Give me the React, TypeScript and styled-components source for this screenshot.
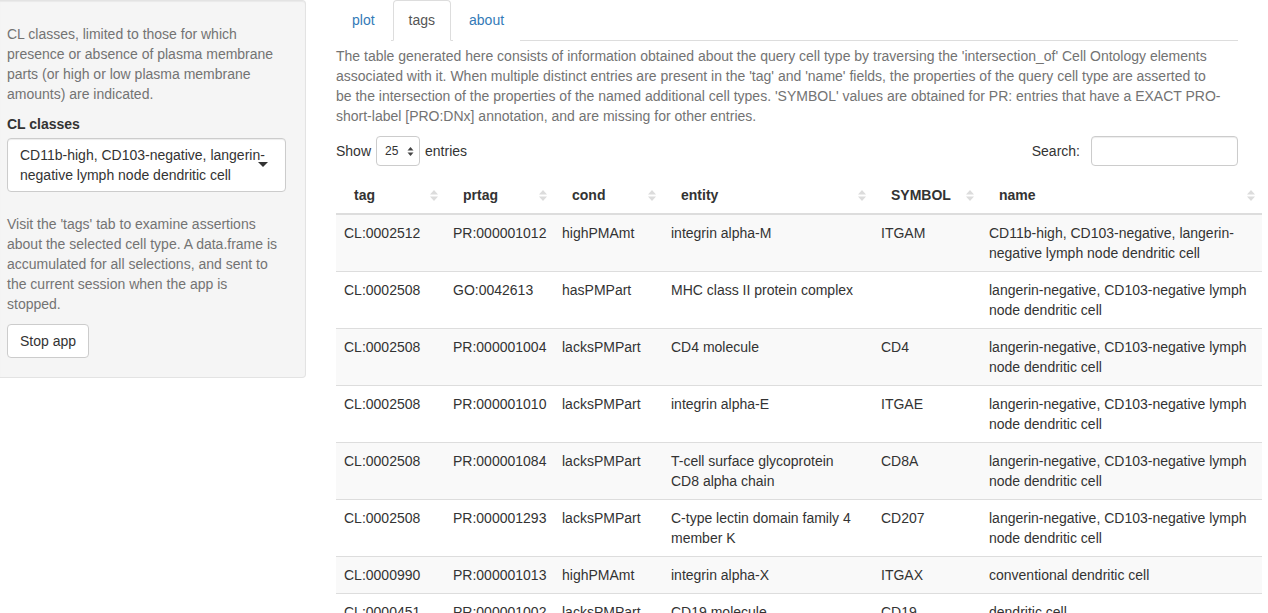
import React from "react";
import styled, { createGlobalStyle } from "styled-components";

const GlobalStyle = createGlobalStyle`
    body {
        margin: 0;
        font-family: "Liberation Sans", "Helvetica Neue", Arial, sans-serif;
        font-size: 14px;
        line-height: 20px;
        color: #333;
        background: #fff;
    }
    * { box-sizing: border-box; }
`;

const Page = styled.div`
    display: flex;
    align-items: flex-start;
`;

const Sidebar = styled.div`
    width: 306px;
    flex-shrink: 0;
`;

const Well = styled.div`
    background: #f5f5f5;
    border: 1px solid #e3e3e3;
    border-left: none;
    border-radius: 0 4px 4px 0;
    box-shadow: inset 0 1px 1px rgba(0, 0, 0, 0.05);
    padding: 18px 19px 19px 7px;
`;

const HelpText = styled.p`
    margin: 5px 0 10px;
    padding-right: 4px;
    color: #737373;
`;

const FormGroup = styled.div`
    margin-bottom: 22px;
`;

const Label = styled.label`
    display: block;
    font-weight: bold;
    margin-bottom: 4px;
`;

const SelectBox = styled.div`
    position: relative;
    background: #fff;
    border: 1px solid #ccc;
    border-radius: 4px;
    box-shadow: inset 0 1px 1px rgba(0, 0, 0, 0.075);
    padding: 6px 12px;
`;

const Caret = styled.span`
    position: absolute;
    right: 17px;
    top: 50%;
    margin-top: -3px;
    width: 0;
    height: 0;
    border-style: solid;
    border-width: 5px 5px 0 5px;
    border-color: #333 transparent transparent transparent;
`;

const Button = styled.button`
    font-family: inherit;
    font-size: 14px;
    line-height: 20px;
    color: #333;
    background: #fff;
    border: 1px solid #ccc;
    border-radius: 4px;
    padding: 6px 12px;
    height: 34px;
`;

const Main = styled.div`
    margin-left: 30px;
    width: 902px;
    flex-shrink: 0;
`;

const Tabs = styled.ul`
    display: flex;
    list-style: none;
    margin: 0;
    padding: 0;
    border-bottom: 1px solid #ddd;
`;

const Tab = styled.li<{ $active?: boolean }>`
    margin-right: 2px;
    margin-bottom: -1px;
    padding: 9px 15px 10px;
    line-height: 20px;
    border: 1px solid ${(p) => (p.$active ? "#ddd" : "transparent")};
    border-bottom-color: transparent;
    border-radius: 4px 4px 0 0;
    background: #fff;
    color: ${(p) => (p.$active ? "#555" : "#337ab7")};
`;

const Description = styled.p`
    margin: 5px 0 10px;
    padding-right: 14px;
    color: #737373;
`;

const Controls = styled.div`
    display: flex;
    justify-content: space-between;
    align-items: center;
    height: 30px;
`;

const ControlLabel = styled.div`
    display: flex;
    align-items: center;
    gap: 5px;
`;

const LengthSelect = styled.div`
    display: flex;
    align-items: center;
    justify-content: space-between;
    width: 44px;
    height: 30px;
    padding: 0 5px 0 8px;
    border: 1px solid #ccc;
    border-radius: 4px;
    font-size: 12px;
    background: #fff;
`;

const SearchInput = styled.div`
    width: 147px;
    height: 30px;
    margin-left: 6px;
    border: 1px solid #ccc;
    border-radius: 4px;
    box-shadow: inset 0 1px 1px rgba(0, 0, 0, 0.075);
    background: #fff;
`;

const Table = styled.table`
    margin-top: 7px;
    width: 926px;
    table-layout: fixed;
    border-collapse: collapse;
`;

const Th = styled.th<{ $w: number }>`
    width: ${(p) => p.$w}px;
    text-align: left;
    font-weight: bold;
    padding: 12px 7px 8px 18px;
    border-bottom: 2px solid #ddd;
`;

const ThInner = styled.div`
    display: flex;
    justify-content: space-between;
    align-items: center;
`;

const Tr = styled.tr<{ $odd: boolean }>`
    background: ${(p) => (p.$odd ? "#f9f9f9" : "#fff")};
`;

const Td = styled.td`
    padding: 8px;
    vertical-align: top;
    border-top: 1px solid #ddd;
`;

const SortIcon = () => (
    <svg width="8" height="13" viewBox="0 0 8 13">
        <path d="M0 5.5 L4 1 L8 5.5 Z" fill="#dcdcdc" />
        <path d="M0 7.5 L4 12 L8 7.5 Z" fill="#dcdcdc" />
    </svg>
);

const SpinArrows = () => (
    <svg width="7" height="11" viewBox="0 0 7 11">
        <path d="M0.5 4.5 L3.5 1 L6.5 4.5 Z" fill="#444" />
        <path d="M0.5 6.5 L3.5 10 L6.5 6.5 Z" fill="#444" />
    </svg>
);

const columns = [
    { key: "tag", w: 109 },
    { key: "prtag", w: 109 },
    { key: "cond", w: 109 },
    { key: "entity", w: 210 },
    { key: "SYMBOL", w: 108 },
    { key: "name", w: 281 },
];

const lnNeg = "langerin-negative, CD103-negative lymph node dendritic cell";

const rows = [
    ["CL:0002512", "PR:000001012", "highPMAmt", "integrin alpha-M", "ITGAM", "CD11b-high, CD103-negative, langerin-negative lymph node dendritic cell"],
    ["CL:0002508", "GO:0042613", "hasPMPart", "MHC class II protein complex", "", lnNeg],
    ["CL:0002508", "PR:000001004", "lacksPMPart", "CD4 molecule", "CD4", lnNeg],
    ["CL:0002508", "PR:000001010", "lacksPMPart", "integrin alpha-E", "ITGAE", lnNeg],
    ["CL:0002508", "PR:000001084", "lacksPMPart", "T-cell surface glycoprotein CD8 alpha chain", "CD8A", lnNeg],
    ["CL:0002508", "PR:000001293", "lacksPMPart", "C-type lectin domain family 4 member K", "CD207", lnNeg],
    ["CL:0000990", "PR:000001013", "highPMAmt", "integrin alpha-X", "ITGAX", "conventional dendritic cell"],
    ["CL:0000451", "PR:000001002", "lacksPMPart", "CD19 molecule", "CD19", "dendritic cell"],
];

export default function App() {
    return (
        <>
            <GlobalStyle />
            <Page>
                <Sidebar>
                    <Well>
                        <HelpText>
                            CL classes, limited to those for which presence or absence of plasma membrane parts (or high or low plasma membrane amounts) are indicated.
                        </HelpText>
                        <FormGroup>
                            <Label>CL classes</Label>
                            <SelectBox>
                                CD11b-high, CD103-negative, langerin-negative lymph node dendritic cell
                                <Caret />
                            </SelectBox>
                        </FormGroup>
                        <HelpText>
                            Visit the 'tags' tab to examine assertions about the selected cell type. A data.frame is accumulated for all selections, and sent to the current session when the app is stopped.
                        </HelpText>
                        <Button>Stop app</Button>
                    </Well>
                </Sidebar>
                <Main>
                    <Tabs>
                        <Tab>plot</Tab>
                        <Tab $active>tags</Tab>
                        <Tab>about</Tab>
                    </Tabs>
                    <Description>
                        The table generated here consists of information obtained about the query cell type by traversing the 'intersection_of' Cell Ontology elements associated with it. When multiple distinct entries are present in the 'tag' and 'name' fields, the properties of the query cell type are asserted to be the intersection of the properties of the named additional cell types. 'SYMBOL' values are obtained for PR: entries that have a EXACT PRO-short-label [PRO:DNx] annotation, and are missing for other entries.
                    </Description>
                    <Controls>
                        <ControlLabel>
                            Show
                            <LengthSelect>
                                25
                                <SpinArrows />
                            </LengthSelect>
                            entries
                        </ControlLabel>
                        <ControlLabel>
                            Search:
                            <SearchInput />
                        </ControlLabel>
                    </Controls>
                    <Table>
                        <thead>
                            <tr>
                                {columns.map((c) => (
                                    <Th key={c.key} $w={c.w}>
                                        <ThInner>
                                            {c.key}
                                            <SortIcon />
                                        </ThInner>
                                    </Th>
                                ))}
                            </tr>
                        </thead>
                        <tbody>
                            {rows.map((r, i) => (
                                <Tr key={i} $odd={i % 2 === 0}>
                                    {r.map((cell, j) => (
                                        <Td key={j}>{cell}</Td>
                                    ))}
                                </Tr>
                            ))}
                        </tbody>
                    </Table>
                </Main>
            </Page>
        </>
    );
}
